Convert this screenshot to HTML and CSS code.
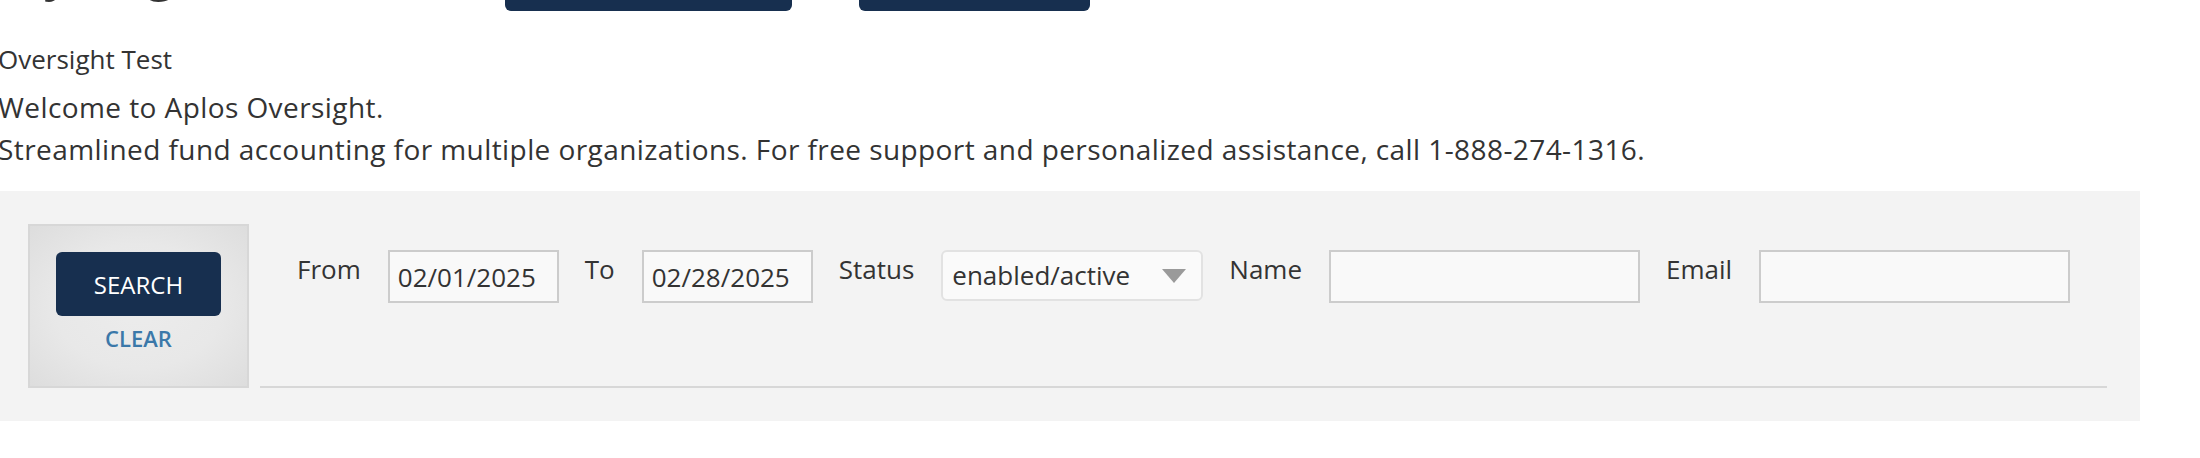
FILE: index.html
```html
<!DOCTYPE html>
<html lang="en">
<head>
<meta charset="utf-8">
<title>Aplos Oversight</title>
<link rel="stylesheet" href="styles.css">
</head>
<body>
<div class="page">
  <header class="topbar">
    <h1 class="title">My Organizations</h1>
    <button class="btn-top btn-add" type="button" aria-label="Add organization"></button>
    <button class="btn-top btn-settings" type="button" aria-label="Settings"></button>
  </header>

  <p class="org-name">Oversight Test</p>
  <p class="welcome">Welcome to Aplos Oversight.<br>Streamlined fund accounting for multiple organizations. For free support and personalized assistance, call 1-888-274-1316.</p>

  <section class="panel">
    <div class="search-box">
      <button class="btn-search" type="button">SEARCH</button>
      <a class="clear-link" href="#">CLEAR</a>
    </div>
    <div class="filters">
      <div class="field">
        <label class="field-label">From</label>
        <input class="text-input date-input" type="text" value="02/01/2025">
      </div>
      <div class="field">
        <label class="field-label">To</label>
        <input class="text-input date-input" type="text" value="02/28/2025">
      </div>
      <div class="field">
        <label class="field-label">Status</label>
        <div class="select">
          <span class="select-text">enabled/active</span>
          <svg class="select-arrow" width="24" height="14" viewBox="0 0 24 14"><polygon points="0,0 24,0 12,14" fill="#9a9a9a"/></svg>
        </div>
      </div>
      <div class="field">
        <label class="field-label">Name</label>
        <input class="text-input wide-input" type="text" value="">
      </div>
      <div class="field">
        <label class="field-label">Email</label>
        <input class="text-input wide-input" type="text" value="">
      </div>
    </div>
  </section>
</div>
</body>
</html>
```

FILE: styles.css
```css
* {
  box-sizing: border-box;
}

html,
body {
  margin: 0;
  padding: 0;
  background: #ffffff;
}

body {
  font-family: "Open Sans", "DejaVu Sans", sans-serif;
  color: #333333;
  overflow: hidden;
}

.page {
  width: 2142px;
  margin: -70px 0 0 -2px;
}

/* Header (mostly scrolled out of view) */
.topbar {
  display: flex;
  align-items: flex-end;
  height: 81px;
}

.title {
  flex: 0 0 507px;
  margin: 0 0 6px 0;
  font-size: 52px;
  font-weight: 400;
  line-height: 70px;
  color: #333333;
  white-space: nowrap;
}

.btn-top {
  height: 60px;
  border: 0;
  border-radius: 6px;
  background: #172f4f;
}

.btn-add {
  width: 287px;
}

.btn-settings {
  width: 231px;
  margin-left: 67px;
}

/* Intro text */
.org-name {
  margin: 29px 0 0 0;
  font-size: 26px;
  line-height: 39px;
}

.welcome {
  margin: 7px 0 0 0;
  font-size: 28px;
  line-height: 42px;
  letter-spacing: 0.42px;
}

/* Search panel */
.panel {
  display: flex;
  margin-top: 21px;
  padding: 33px 33px 33px 30px;
  background: #f3f3f3;
}

.search-box {
  flex: 0 0 221px;
  height: 164px;
  display: flex;
  flex-direction: column;
  align-items: center;
  padding: 26px;
  border: 2px solid #d7d7d7;
  background: radial-gradient(ellipse at center, #ececec 0%, #e8e8e8 55%, #dddddd 100%);
}

.btn-search {
  width: 165px;
  height: 64px;
  flex: 0 0 64px;
  border: 0;
  border-radius: 6px;
  background: #172f4f;
  color: #ffffff;
  font-family: "Open Sans", sans-serif;
  font-size: 24px;
  font-weight: 400;
}

.clear-link {
  margin-top: 6px;
  font-size: 22px;
  line-height: 33px;
  font-weight: 600;
  color: #3b78a9;
  text-decoration: none;
}

.filters {
  flex: 1;
  display: flex;
  align-items: flex-start;
  gap: 26px;
  margin-left: 11px;
  padding: 26px 0 0 37px;
  border-bottom: 2px solid #d7d7d7;
}

.field {
  display: flex;
  align-items: flex-start;
  gap: 27px;
}

.field-label {
  font-size: 26px;
  line-height: 39px;
  color: #333333;
  white-space: nowrap;
}

.text-input {
  height: 53px;
  padding: 0 8px;
  border: 2px solid #cccccc;
  border-radius: 0;
  background: #f9f9f9;
  font-family: "Open Sans", sans-serif;
  font-size: 26px;
  color: #333333;
  outline: none;
}

.date-input {
  width: 171px;
}

.wide-input {
  width: 311px;
}

.select {
  width: 262px;
  height: 51px;
  display: flex;
  align-items: center;
  padding: 0 15px 0 9px;
  border: 2px solid #e2e2e2;
  border-radius: 6px;
  background: #fafafa;
}

.select-text {
  flex: 1;
  font-size: 26px;
  line-height: 39px;
  color: #333333;
  white-space: nowrap;
}

.select-arrow {
  display: block;
  flex: 0 0 24px;
}
```
